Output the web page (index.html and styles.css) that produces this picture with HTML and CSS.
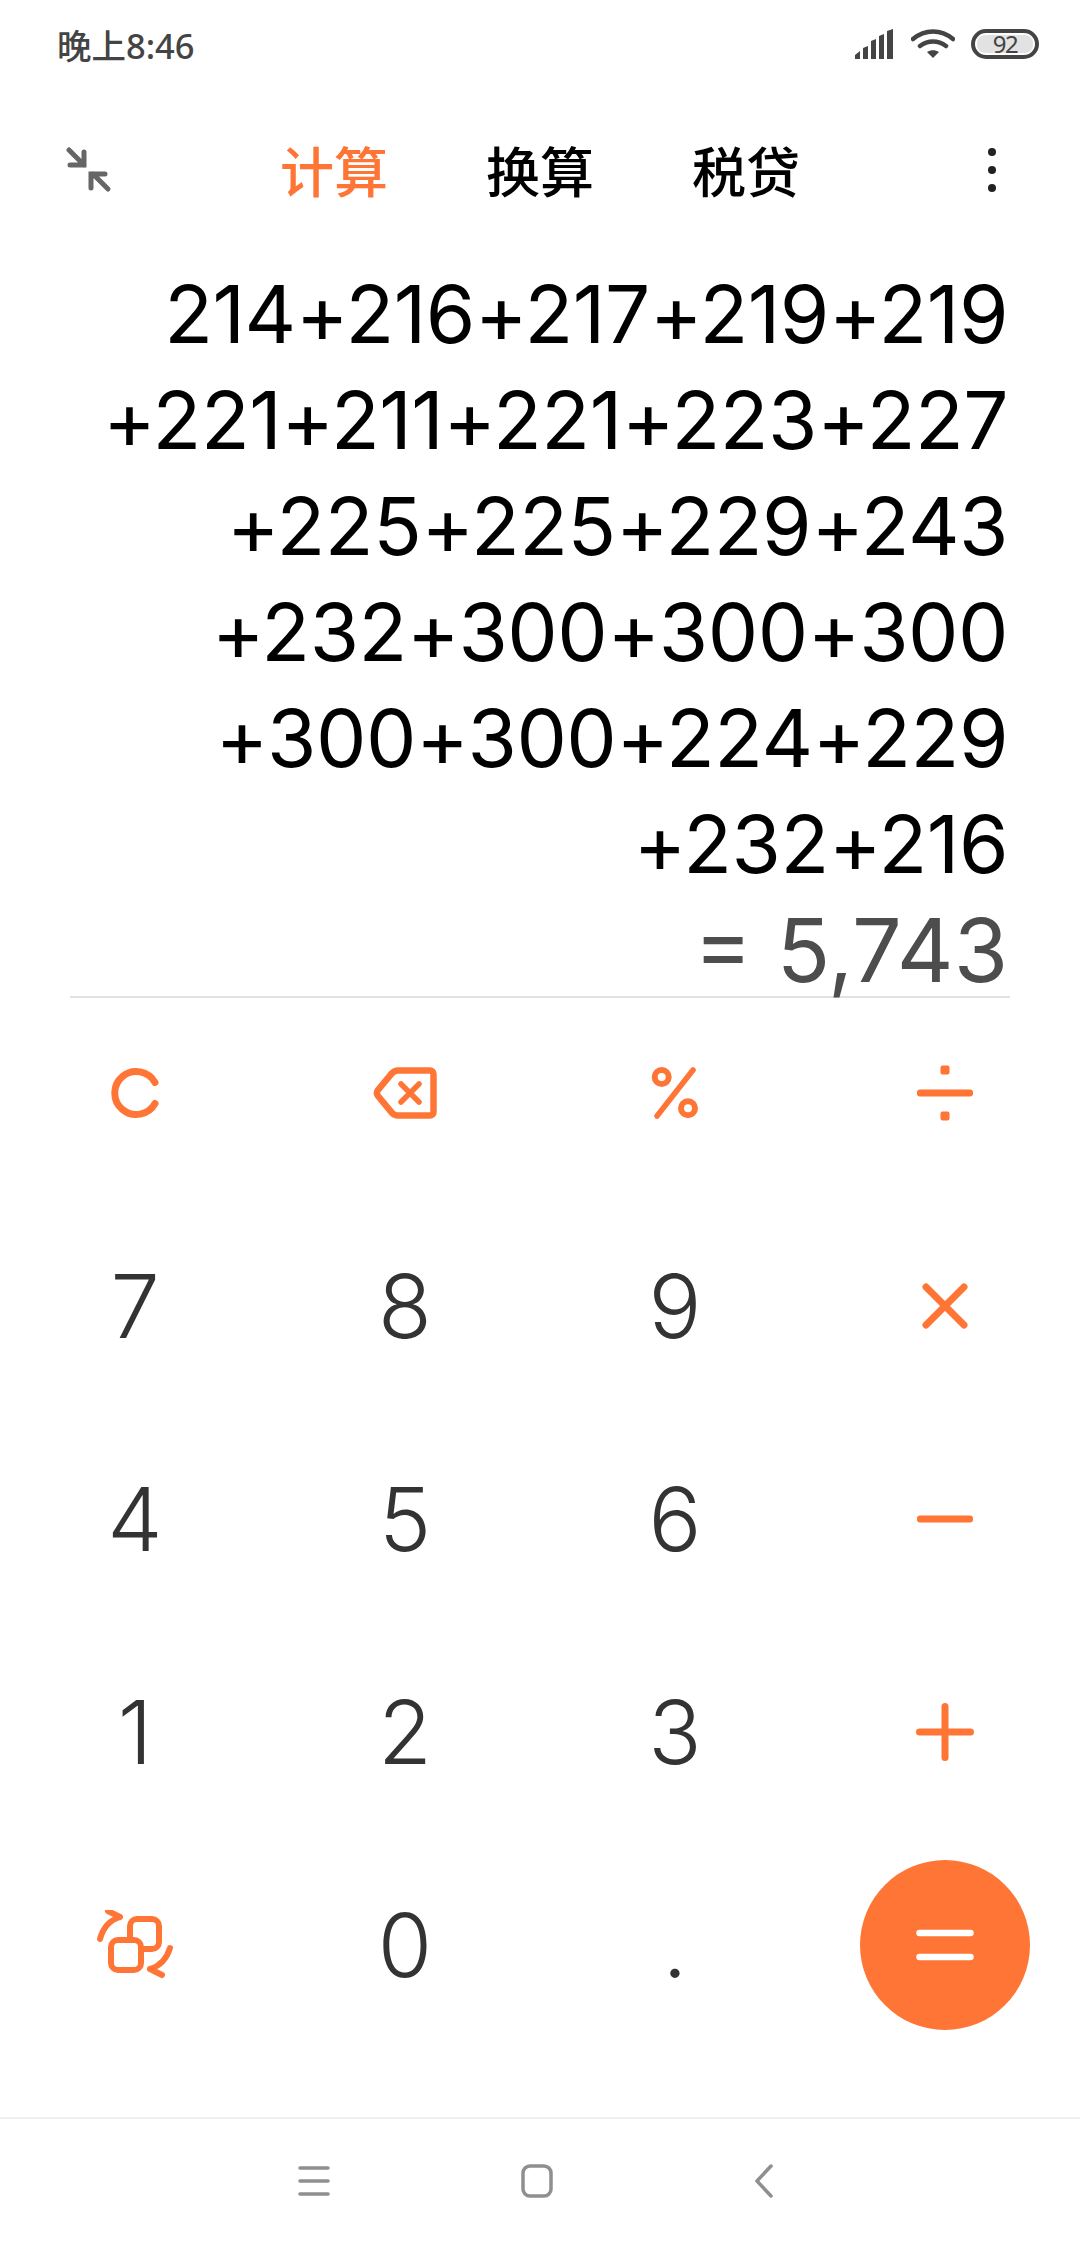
FILE: index.html
```html
<!DOCTYPE html>
<html lang="zh">
<head>
    <meta charset="UTF-8">
    <meta name="viewport" content="width=device-width, initial-scale=1.0">
    <title>计算器</title>
    <link rel="stylesheet" href="styles.css">
</head>
<body>
    <!-- Status bar -->
    <div class="status-bar">
        <span class="time">晚上8:46</span>
        <div class="status-icons">
            <svg class="icon-signal" width="41" height="30" viewBox="0 0 41 30">
                <path d="M0 30v-4l5-4v8zM8 30V19l5-2v13zM16 30V12l5-2v20zM24 30V7l5-2v25zM32 30V2l6-2v30z" fill="#444"/>
            </svg>
            <svg class="icon-wifi" width="44" height="30" viewBox="0 0 44 30">
                <path d="M2 10C14 0 30 0 42 10M9 17c8-6 18-6 26 0" fill="none" stroke="#444" stroke-width="4.5" stroke-linecap="round"/>
                <path d="M16 23c4-2.500 8-2.500 12 0l-6 6z" fill="#444"/>
            </svg>
            <div class="battery"><span class="battery-level">92</span></div>
        </div>
    </div>

    <!-- Tabs -->
    <div class="tab-bar">
        <svg class="icon-collapse" width="46" height="46" viewBox="0 0 46 46">
            <path d="M3 3l15 15M4 18h14V5" fill="none" stroke="#666" stroke-width="5" stroke-linecap="round" stroke-linejoin="miter"/>
            <path d="M42 42L27 27M25 41V27h14" fill="none" stroke="#666" stroke-width="5" stroke-linecap="round" stroke-linejoin="miter"/>
        </svg>
        <div class="tabs">
            <span class="tab active">计算</span>
            <span class="tab">换算</span>
            <span class="tab">税贷</span>
        </div>
        <div class="more"><i></i><i></i><i></i></div>
    </div>

    <!-- Expression and result -->
    <div class="display">
        <div class="line">214+216+217+219+219</div>
        <div class="line">+221+211+221+223+227</div>
        <div class="line">+225+225+229+243</div>
        <div class="line">+232+300+300+300</div>
        <div class="line">+300+300+224+229</div>
        <div class="line">+232+216</div>
        <div class="line result">= 5,743</div>
    </div>
    <div class="divider"></div>

    <!-- Keypad -->
    <div class="keypad">
        <div class="key">
            <svg class="icon-clear" width="52" height="52" viewBox="0 0 52 52"><path d="M44 15.500A21.500 21.500 0 1 0 44 36.500" fill="none" stroke="#ff7535" stroke-width="7" stroke-linecap="round"/></svg>
        </div>
        <div class="key">
            <svg width="64" height="52" viewBox="0 0 64 52">
                <path d="M25 3.500H57a3.500 3.500 0 0 1 3.500 3.500V45a3.500 3.500 0 0 1-3.500 3.500H25a8 8 0 0 1-6-2.700L5 29a5 5 0 0 1 0-6L19 6.200a8 8 0 0 1 6-2.700z" fill="none" stroke="#ff7535" stroke-width="6.500" stroke-linejoin="round"/>
                <path d="M28 17l18 18M46 17L28 35" fill="none" stroke="#ff7535" stroke-width="5.500" stroke-linecap="round"/>
            </svg>
        </div>
        <div class="key">
            <svg width="48" height="52" viewBox="0 0 48 52">
                <circle cx="10.700" cy="10" r="7" fill="none" stroke="#ff7535" stroke-width="6"/>
                <circle cx="37" cy="41.300" r="7" fill="none" stroke="#ff7535" stroke-width="6"/>
                <path d="M42 3L6 49" fill="none" stroke="#ff7535" stroke-width="5.500" stroke-linecap="round"/>
            </svg>
        </div>
        <div class="key">
            <svg width="58" height="58" viewBox="0 0 58 58">
                <rect x="24.500" y="1.500" width="9" height="9" rx="2" fill="#ff7535"/>
                <rect x="1" y="25.500" width="56" height="7" rx="3" fill="#ff7535"/>
                <rect x="24.500" y="47.500" width="9" height="9" rx="2" fill="#ff7535"/>
            </svg>
        </div>

        <div class="key">7</div>
        <div class="key">8</div>
        <div class="key">9</div>
        <div class="key">
            <svg width="46" height="46" viewBox="0 0 46 46"><path d="M4 4l38 38M42 4L4 42" fill="none" stroke="#ff7535" stroke-width="7" stroke-linecap="round"/></svg>
        </div>

        <div class="key">4</div>
        <div class="key">5</div>
        <div class="key">6</div>
        <div class="key">
            <svg width="58" height="8" viewBox="0 0 58 8"><rect x="1" y="0.500" width="56" height="7" rx="3" fill="#ff7535"/></svg>
        </div>

        <div class="key">1</div>
        <div class="key">2</div>
        <div class="key">3</div>
        <div class="key">
            <svg width="58" height="58" viewBox="0 0 58 58"><path d="M3.500 29h51M29 3.500v51" fill="none" stroke="#ff7535" stroke-width="7" stroke-linecap="round"/></svg>
        </div>

        <div class="key">
            <svg width="78" height="70" viewBox="0 2 78 70">
                <path d="M4 31C7 20 14 12 24 9M12 3l12 6" fill="none" stroke="#ff7535" stroke-width="6" stroke-linecap="round" stroke-linejoin="round"/>
                <path d="M74 40C71 50 64 58 54 61M66 67l-12-6" fill="none" stroke="#ff7535" stroke-width="6" stroke-linecap="round" stroke-linejoin="round"/>
                <rect x="34" y="11" width="29" height="30" rx="7" fill="none" stroke="#ff7535" stroke-width="6"/>
                <rect x="15" y="32" width="30" height="30" rx="7" fill="#fff" stroke="#ff7535" stroke-width="6"/>
            </svg>
        </div>
        <div class="key">0</div>
        <div class="key">.</div>
        <div class="key">
            <div class="equals">
                <svg width="58" height="34" viewBox="0 0 58 34"><path d="M3.500 5h51M3.500 29h51" fill="none" stroke="#fff" stroke-width="6.500" stroke-linecap="round"/></svg>
            </div>
        </div>
    </div>

    <!-- Navigation bar -->
    <div class="nav-bar">
        <svg width="32" height="32" viewBox="0 0 32 32"><path d="M2 3h28M2 16h28M2 29h28" fill="none" stroke="#8f8f8f" stroke-width="3.500" stroke-linecap="round"/></svg>
        <svg class="nav-home" width="32" height="34" viewBox="0 0 32 34"><rect x="2" y="2" width="28" height="30" rx="7" fill="none" stroke="#8f8f8f" stroke-width="3.500"/></svg>
        <svg width="20" height="34" viewBox="0 0 20 34"><path d="M17 2L3 17l14 15" fill="none" stroke="#8f8f8f" stroke-width="3.500" stroke-linecap="round" stroke-linejoin="round"/></svg>
    </div>
</body>
</html>
```

FILE: styles.css
```css
* {
    box-sizing: border-box;
}
html, body {
    margin: 0;
    padding: 0;
}
body {
    width: 1080px;
    height: 2248px;
    background: #fff;
    font-family: Inter, "Noto Sans CJK SC", sans-serif;
    overflow: hidden;
}
.status-bar {
    display: flex;
    justify-content: space-between;
    align-items: center;
    height: 88px;
    padding: 0 41px 0 57px;
}
.time {
    font-family: "Noto Sans", "Noto Sans CJK SC", sans-serif;
    font-size: 34.500px;
    font-weight: 500;
    color: #444;
}
.status-icons {
    display: flex;
    align-items: center;
    gap: 15px;
}
.battery {
    display: flex;
    align-items: center;
    justify-content: center;
    width: 68px;
    height: 30px;
    margin-left: 1px;
    border: 4px solid #444;
    border-radius: 15px;
    padding: 2px;
}
.battery-level {
    width: 100%;
    height: 100%;
    border-radius: 8px;
    background: #e2e2e2;
    color: #444;
    font-family: "Noto Sans", sans-serif;
    font-size: 24px;
    letter-spacing: -1.500px;
    line-height: 18px;
    text-align: center;
}
.tab-bar {
    display: grid;
    grid-template-columns: 1fr auto 1fr;
    align-items: center;
    height: 80px;
    margin-top: 42px;
    padding: 0 66px;
}
.tabs {
    display: flex;
    gap: 98px;
}
.tab {
    font-family: "Noto Sans CJK SC", sans-serif;
    font-size: 54px;
    font-weight: 500;
    line-height: 80px;
    color: #000;
}
.tab.active {
    color: #ff7535;
}
.more {
    display: flex;
    flex-direction: column;
    align-items: flex-end;
    gap: 10px;
    justify-self: end;
    margin-right: 18px;
}
.more i {
    width: 8px;
    height: 8px;
    border-radius: 50%;
    background: #222;
}
.display {
    height: 735px;
    margin-top: 51px;
    padding: 0 72px 0 70px;
    text-align: right;
    color: #000;
}
.line {
    height: 106px;
    font-size: 80px;
    letter-spacing: -0.500px;
    line-height: 106px;
    white-space: nowrap;
}
.line.result {
    color: #4d4d4d;
    font-size: 88px;
    letter-spacing: 0;
}
.divider {
    height: 2px;
    margin: 0 70px -11px;
    background: #e2e2e2;
}
.keypad {
    display: grid;
    grid-template-columns: repeat(4, 270px);
    grid-auto-rows: 212.800px;
}
.key {
    display: flex;
    align-items: center;
    justify-content: center;
    font-size: 88px;
    font-weight: 350;
    color: #333;
}
.icon-clear {
    margin-left: 4px;
}
.equals {
    display: flex;
    align-items: center;
    justify-content: center;
    width: 170px;
    height: 170px;
    border-radius: 50%;
    background: #ff7535;
}
.nav-bar {
    display: flex;
    align-items: center;
    height: 130px;
    margin-top: 66px;
    padding: 0 0 4px 298px;
    border-top: 2px solid #efefef;
}
.nav-home {
    margin: 0 201px 0 191px;
}
```
